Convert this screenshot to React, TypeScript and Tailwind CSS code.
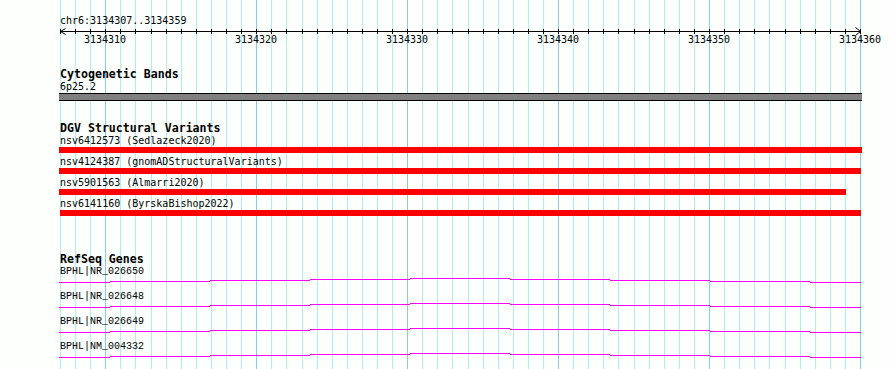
import * as React from "react";

const START = 3134307;
const END = 3134359;
const X0 = 60;
const SPAN = 800;
const PX = SPAN / (END - START + 1);

function xOf(pos: number) {
  return X0 + (pos - START) * PX;
}

const variants = [
  { id: "nsv6412573", study: "Sedlazeck2020", x1: 59, x2: 862 },
  { id: "nsv4124387", study: "gnomADStructuralVariants", x1: 59, x2: 861 },
  { id: "nsv5901563", study: "Almarri2020", x1: 59, x2: 846 },
  { id: "nsv6141160", study: "ByrskaBishop2022", x1: 60, x2: 861 },
];

const genes = ["BPHL|NR_026650", "BPHL|NR_026648", "BPHL|NR_026649", "BPHL|NM_004332"];

// the transcript line bows up a pixel every 100px
const geneSegments: Array<[number, number, number]> = [
  [59, 110, 4],
  [110, 210, 3],
  [210, 310, 2],
  [310, 410, 1],
  [410, 510, 0],
  [510, 610, 1],
  [610, 710, 2],
  [710, 810, 3],
  [810, 861, 4],
];

const labels = [3134310, 3134320, 3134330, 3134340, 3134350, 3134360];

function Grid() {
  const lines = [];
  for (let pos = START; pos <= END + 1; pos++) {
    const x = Math.round(xOf(pos)) + 0.5;
    const major = pos % 10 === 0;
    lines.push(
      <line key={pos} x1={x} x2={x} y1={0} y2={369} stroke={major ? "#8ccbe8" : "#b0eef0"} strokeWidth={1} />,
    );
  }
  return (
    <svg className="absolute inset-0" width={890} height={369}>
      {lines}
    </svg>
  );
}

function Ruler() {
  const ticks = [];
  for (let pos = START; pos <= END + 1; pos++) {
    const x = Math.round(xOf(pos)) + 0.5;
    ticks.push(<line key={pos} x1={x} x2={x} y1={2} y2={7} stroke="#000" strokeWidth={1} />);
  }
  return (
    <div>
      <div className="pt-[15px] pl-[60px] text-[10px] leading-[12px]">chr6:3134307..3134359</div>
      <div className="relative h-[20px]">
        <svg className="absolute left-0 top-0" width={890} height={20}>
          <line x1={60} x2={861} y1={4.5} y2={4.5} stroke="#000" strokeWidth={1} />
          <polyline points="65.5,1.5 60.5,4.5 65.5,7.5" fill="none" stroke="#000" strokeWidth={1} />
          <polyline points="855.5,0.5 860.5,4.5 855.5,8.5" fill="none" stroke="#000" strokeWidth={1} />
          {ticks}
        </svg>
        {labels.map((p) => (
          <span
            key={p}
            className="absolute top-[7px] text-[10px] leading-[12px]"
            style={{ left: Math.round(xOf(p)) - 21 }}
          >
            {p}
          </span>
        ))}
      </div>
    </div>
  );
}

function TrackTitle({ children, leading }: { children: React.ReactNode; leading: string }) {
  return <div className={`pl-[60px] font-bold text-[11.6px] ${leading}`}>{children}</div>;
}

export default function App() {
  return (
    <div className="relative w-[890px] h-[369px] overflow-hidden bg-[#fcfffc] text-black font-['DejaVu_Sans_Mono','Liberation_Mono',monospace]">
      <Grid />
      <div className="relative flex flex-col">
        <Ruler />

        {/* cytogenetic bands */}
        <div className="mt-[21px]">
          <TrackTitle leading="leading-[13px]">Cytogenetic Bands</TrackTitle>
          <div className="pl-[60px] text-[10px] leading-[12px]">6p25.2</div>
          <div className="ml-[59px] w-[803px] h-[8px] border-y border-black bg-[#808080]" />
        </div>

        {/* DGV */}
        <div className="mt-[20px]">
          <TrackTitle leading="leading-[14px]">DGV Structural Variants</TrackTitle>
          <div className="flex flex-col gap-[3px]">
            {variants.map((v) => (
              <div key={v.id}>
                <div className="pl-[60px] text-[10px] leading-[12px] whitespace-pre">
                  {v.id} ({v.study})
                </div>
                <div className="h-[6px] bg-[#ff0000]" style={{ marginLeft: v.x1, width: v.x2 - v.x1 }} />
              </div>
            ))}
          </div>
        </div>

        {/* RefSeq */}
        <div className="mt-[37px]">
          <TrackTitle leading="leading-[13px]">RefSeq Genes</TrackTitle>
          {genes.map((g) => (
            <div key={g} className="flex flex-col">
              <div className="relative z-10 pl-[60px] text-[10px] leading-[12px] font-['Liberation_Mono',monospace]">
                {g}
              </div>
              <svg className="block" width={890} height={13}>
                {geneSegments.map(([a, b, dy]) => (
                  <rect key={a} x={a} y={dy} width={b - a} height={1} fill="#ff00ff" />
                ))}
              </svg>
            </div>
          ))}
        </div>
      </div>
    </div>
  );
}
